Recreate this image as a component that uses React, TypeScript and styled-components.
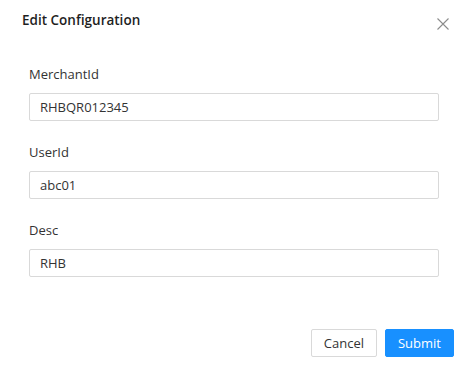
import React from "react";
import styled, { createGlobalStyle } from "styled-components";

const Global = createGlobalStyle`
  html, body {
    margin: 0;
    padding: 0;
    background: #ffffff;
  }
  body {
    font-family: "Open Sans", "Noto Sans", sans-serif;
    color: #333333;
  }
`;

const Dialog = styled.div`
  width: 468px;
  height: 384px;
  display: flex;
  flex-direction: column;
  box-sizing: border-box;
`;

const Header = styled.div`
  display: flex;
  justify-content: space-between;
  align-items: flex-start;
  padding: 10px 18px 0 22px;
  height: 40px;
  box-sizing: border-box;
`;

const Title = styled.div`
  font-size: 13.5px;
  font-weight: 600;
  color: #1f1f1f;
  line-height: 20px;
`;

const Close = styled.button`
  border: none;
  background: none;
  padding: 0;
  margin-top: 7px;
  width: 14px;
  height: 14px;
  cursor: pointer;
  color: #8c8c8c;
  display: flex;
`;

const Form = styled.div`
  display: flex;
  flex-direction: column;
  gap: 22px;
  padding: 25px 29px 0 29px;
`;

const Field = styled.div`
  display: flex;
  flex-direction: column;
  gap: 10px;
`;

const Label = styled.label`
  font-size: 13px;
  line-height: 18px;
  color: #333333;
`;

const Input = styled.input`
  box-sizing: border-box;
  height: 28px;
  width: 100%;
  border: 1px solid #d9d9d9;
  border-radius: 2px;
  padding: 0 10px;
  font-family: inherit;
  font-size: 13px;
  color: #333333;
  outline: none;
`;

const Footer = styled.div`
  margin-top: auto;
  display: flex;
  justify-content: flex-end;
  gap: 8px;
  padding: 0 14px 27px 0;
`;

const Button = styled.button<{ $primary?: boolean }>`
  box-sizing: border-box;
  height: 28px;
  padding: 0 12px;
  border-radius: 2px;
  font-family: inherit;
  font-size: 13px;
  cursor: pointer;
  border: 1px solid ${(p) => (p.$primary ? "#1890ff" : "#d9d9d9")};
  background: ${(p) => (p.$primary ? "#1890ff" : "#ffffff")};
  color: ${(p) => (p.$primary ? "#ffffff" : "#333333")};
`;

const fields = [
  { label: "MerchantId", value: "RHBQR012345" },
  { label: "UserId", value: "abc01" },
  { label: "Desc", value: "RHB" },
];

export default function App() {
  return (
    <>
      <Global />
      <Dialog>
        <Header>
          <Title>Edit Configuration</Title>
          <Close aria-label="Close">
            <svg width="14" height="14" viewBox="0 0 14 14">
              <path d="M1.5 1.5 L12.5 12.5 M12.5 1.5 L1.5 12.5" stroke="currentColor" strokeWidth="1.1" fill="none" />
            </svg>
          </Close>
        </Header>
        <Form>
          {fields.map((f) => (
            <Field key={f.label}>
              <Label>{f.label}</Label>
              <Input defaultValue={f.value} />
            </Field>
          ))}
        </Form>
        <Footer>
          <Button>Cancel</Button>
          <Button $primary>Submit</Button>
        </Footer>
      </Dialog>
    </>
  );
}
